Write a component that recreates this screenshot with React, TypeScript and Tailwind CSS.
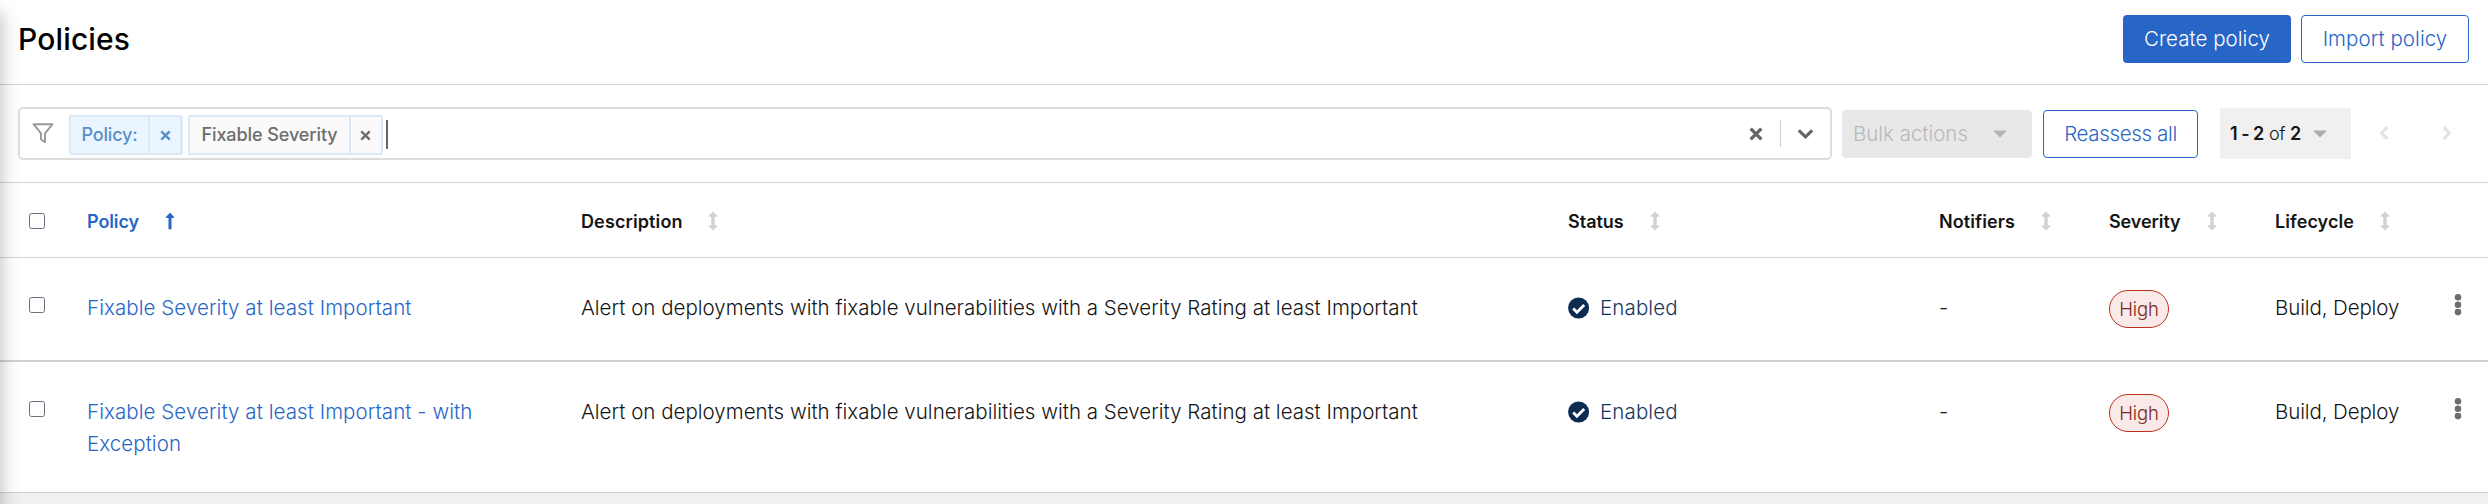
import type { ReactNode } from "react";

const grid =
  "grid grid-cols-[87px_494px_987px_371px_170px_166px_1fr]";

function SortIcon() {
  return (
    <svg width="10" height="20" viewBox="0 0 10 20" className="block shrink-0">
      <path
        d="M5 .4 9.1 4.6Q9.6 5.6 8.6 5.7H6.7V14.3H8.6Q9.6 14.4 9.1 15.4L5 19.6.9 15.4Q.4 14.4 1.4 14.3H3.3V5.7H1.4Q.4 5.6.9 4.6Z"
        fill="#d2d2d2"
      />
    </svg>
  );
}

function UpIcon() {
  return (
    <svg width="10" height="18" viewBox="0 0 10 18" className="block shrink-0">
      <path d="M5 .6 9 4.9Q9.5 5.9 8.5 6H6.5V17.2H3.5V6H1.5Q.5 5.9 1 4.9Z" fill="#2766c6" />
    </svg>
  );
}

function Caret({ color, className }: { color: string; className: string }) {
  return (
    <svg width="14" height="8" viewBox="0 0 14 8" className={className}>
      <path d="M1.2.6H12.8Q13.6.8 13 1.5L7.6 7Q7 7.5 6.4 7L1 1.5Q.4.8 1.2.6Z" fill={color} />
    </svg>
  );
}

function Cross({ size, width, color }: { size: number; width: number; color: string }) {
  return (
    <svg width={size} height={size} viewBox="0 0 12 12" className="block">
      <path d="M1.4 1.4 10.6 10.6M10.6 1.4 1.4 10.6" stroke={color} strokeWidth={width} fill="none" />
    </svg>
  );
}

function Chevron({ d, className }: { d: string; className: string }) {
  return (
    <svg width="10" height="16" viewBox="0 0 10 16" className={className}>
      <path d={d} stroke="#e4e4e4" strokeWidth="3.2" fill="none" />
    </svg>
  );
}

function Checkbox() {
  return (
    <span className="ml-[29px] block h-4 w-4 rounded-[2.5px] border border-[#6b6f7e] bg-white" />
  );
}

function HeadCell({
  children,
  gap,
  text,
}: {
  children?: ReactNode;
  gap: string;
  text: string;
}) {
  return (
    <div className={`flex items-center font-semibold text-[18px] ${gap}`}>
      <span className={text}>{children}</span>
      <SortIcon />
    </div>
  );
}

function Row({ name, className }: { name: string; className: string }) {
  return (
    <div className={`${grid} items-start text-[20.5px] leading-8 text-[#151515] font-[350] ${className}`}>
      <div className="pt-[39px]">
        <Checkbox />
      </div>
      <div className="w-[400px] pt-[34px] tracking-[0.07px] text-[#2766c6]">{name}</div>
      <div className="pt-[34px] tracking-[0.015px]">
        Alert on deployments with fixable vulnerabilities with a Severity Rating at least Important
      </div>
      <div className="flex pt-[34px] text-[#16355f]">
        <svg width="22" height="22" viewBox="0 0 22 22" className="mr-[10px] mt-[5px] block">
          <circle cx="10.6" cy="11" r="10.5" fill="#0d2b52" />
          <path d="m5.2 11.5 3.7 3.7 7.3-7.3" stroke="#fff" strokeWidth="2.8" fill="none" />
        </svg>
        <span className="tracking-[0.12px]">Enabled</span>
      </div>
      <div className="pt-[34px]">-</div>
      <div className="pt-8">
        <span className="flex h-[38px] w-[60px] items-center justify-center rounded-full border border-[#c1301f] bg-[#f9eae9] text-[18.5px] tracking-[-0.2px] text-[#7c2a20]">
          High
        </span>
      </div>
      <div className="flex justify-between pr-[25px]">
        <span className="pt-[34px] tracking-[-0.12px]">Build, Deploy</span>
        <svg width="10" height="24" viewBox="0 0 10 24" fill="#6a6e73" className="mt-[35px] block">
          <circle cx="5" cy="4.3" r="3.3" />
          <circle cx="5" cy="11.7" r="3.3" />
          <circle cx="5" cy="19.1" r="3.3" />
        </svg>
      </div>
    </div>
  );
}

export default function App() {
  return (
    <div className="relative flex h-[504px] w-[2488px] flex-col overflow-hidden bg-white font-['Inter',sans-serif] text-[#151515]">
      <header className="flex h-[85px] items-start justify-between border-b border-[#d2d2d2] pl-[18px] pr-[19px] pt-[15px]">
        <h1 className="text-[30px] font-[480] leading-[48px] tracking-[0.15px] text-black">Policies</h1>
        <div className="flex gap-[10px] text-[20.5px] font-[350]">
          <button className="h-12 w-[168px] rounded-[4px] bg-[#2766c6] tracking-[0.04px] text-white">
            Create policy
          </button>
          <button className="h-12 w-[168px] rounded-[4px] border border-[#2766c6] tracking-[0.06px] text-[#2766c6]">
            Import policy
          </button>
        </div>
      </header>

      <div className="flex h-[98px] items-start border-b border-[#d2d2d2] pl-[18px] pt-[22px]">
        <div className="flex h-[53px] w-[1814px] items-center rounded-[5px] border-2 border-[#dcdcdc] text-[18px] font-medium">
          <svg width="22" height="21" viewBox="0 0 22 21" className="ml-3 mr-[15px] block">
            <path
              d="M1.5 1.2H20.5L13 10.4V19.2L9 16.2V10.4Z"
              stroke="#999"
              strokeWidth="1.9"
              fill="none"
              strokeLinejoin="round"
            />
          </svg>
          <div className="mt-[3px] flex h-10 w-[114px] rounded-[2px] border-2 border-[#dbe9f7] bg-[#ebf5ff] text-[#588fc8]">
            <span className="flex w-[79px] items-center justify-center border-r-2 border-[#dbe9f7] pb-[2px] tracking-[-0.2px]">
              Policy:
            </span>
            <span className="flex flex-1 items-center justify-center border-r border-[#dbe9f7]">
              <Cross size={11} width={2.6} color="#588fc8" />
            </span>
          </div>
          <div className="ml-[5px] mt-[3px] flex h-10 w-[195px] rounded-[2px] border-2 border-[#dbe9f7] bg-[#fafafa] text-[#6d6d6d]">
            <span className="flex w-[161px] items-center justify-center border-r-2 border-[#dbe9f7] pb-[2px] tracking-[-0.08px]">
              Fixable Severity
            </span>
            <span className="flex flex-1 items-center justify-center pr-px">
              <Cross size={11} width={2.6} color="#6d6d6d" />
            </span>
          </div>
          <span className="ml-[3px] mt-[2px] h-[29px] w-[2px] bg-[#666]" />
          <span className="ml-auto">
            <Cross size={14} width={2.9} color="#666" />
          </span>
          <span className="ml-[17px] h-[27px] w-px bg-[#ccc]" />
          <svg width="17" height="12" viewBox="0 0 17 12" className="ml-4 mr-4 block">
            <path d="M1.8 2.4 8.5 8.8 15.2 2.4" stroke="#666" strokeWidth="3.2" fill="none" />
          </svg>
        </div>

        <button className="ml-[10px] mt-[3px] flex h-12 w-[190px] items-center rounded-[4px] bg-[#e8e8e8] pl-[11px] text-[20.5px] font-[350] tracking-[-0.02px] text-[#b8b9bb]">
          Bulk actions
          <Caret color="#b3b4b6" className="ml-auto mr-[25px] block" />
        </button>
        <button className="ml-[11px] mt-[3px] h-12 w-[155px] rounded-[4px] border border-[#2766c6] text-[20.5px] font-[350] tracking-[-0.35px] text-[#2766c6]">
          Reassess all
        </button>
        <button className="ml-[22px] mt-px flex h-[51px] w-[131px] items-center bg-[#f0f0f0] pl-[10px] text-[18px]">
          <span className="w-[39px] text-left font-semibold tracking-[-0.5px]">1 - 2</span>
          <span className="w-[21px] text-left font-[350] tracking-[-0.4px]">of</span>
          <span className="font-semibold">2</span>
          <Caret color="#adadad" className="ml-auto mr-6 block" />
        </button>
        <Chevron d="M8.4 1.8 2.6 8 8.4 14.2" className="ml-7 mt-[18px] block" />
        <Chevron d="M1.6 1.8 7.4 8 1.6 14.2" className="ml-[53px] mt-[18px] block" />
      </div>

      <div className={`${grid} h-[75px] items-center border-b border-[#d2d2d2] pt-[2px]`}>
        <Checkbox />
        <div className="flex items-center gap-[26px] text-[18px] font-semibold text-[#2766c6]">
          <span className="tracking-[-0.1px]">Policy</span>
          <UpIcon />
        </div>
        <HeadCell gap="gap-[25px]" text="tracking-[0.12px]">Description</HeadCell>
        <HeadCell gap="gap-[26px]" text="">Status</HeadCell>
        <HeadCell gap="gap-[26px]" text="tracking-[0.08px]">Notifiers</HeadCell>
        <HeadCell gap="gap-[26px]" text="tracking-[-0.09px]">Severity</HeadCell>
        <HeadCell gap="gap-[26px]" text="tracking-[0.07px]">Lifecycle</HeadCell>
      </div>

      <Row name="Fixable Severity at least Important" className="h-[104px] border-b-2 border-[#d2d2d2]" />
      <Row
        name="Fixable Severity at least Important - with Exception"
        className="h-[131px] border-b border-[#d2d2d2]"
      />
      <div className="flex-1 bg-[#f0f0f0]" />

      <div className="pointer-events-none absolute left-0 top-0 h-[504px] w-[19px] bg-gradient-to-r from-black/14 via-black/4 to-transparent [mask-image:linear-gradient(to_bottom,transparent,black_24px)]" />
    </div>
  );
}
